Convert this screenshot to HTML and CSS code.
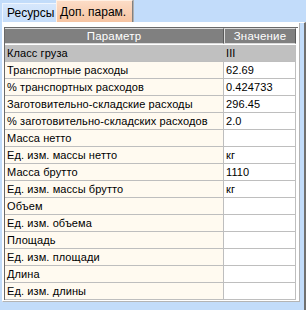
FILE: index.html
```html
<!DOCTYPE html>
<html>
<head>
<meta charset="utf-8">
<link rel="stylesheet" href="styles.css">
</head>
<body>
<div class="tabs">
  <div class="tab tab-blue">Ресурсы</div>
  <div class="tab tab-active">Доп. парам.</div>
</div>
<div class="frame">
  <div class="panel">
    <div class="grid">
      <div class="hcell">Параметр</div>
      <div class="hcell">Значение</div>

      <div class="cell p sel">Класс груза</div><div class="cell v sel">III</div>
      <div class="cell p">Транспортные расходы</div><div class="cell v">62.69</div>
      <div class="cell p">% транспортных расходов</div><div class="cell v">0.424733</div>
      <div class="cell p">Заготовительно-складские расходы</div><div class="cell v">296.45</div>
      <div class="cell p">% заготовительно-складских расходов</div><div class="cell v">2.0</div>
      <div class="cell p">Масса нетто</div><div class="cell v"></div>
      <div class="cell p">Ед. изм. массы нетто</div><div class="cell v">кг</div>
      <div class="cell p">Масса брутто</div><div class="cell v">1110</div>
      <div class="cell p">Ед. изм. массы брутто</div><div class="cell v">кг</div>
      <div class="cell p">Объем</div><div class="cell v"></div>
      <div class="cell p">Ед. изм. объема</div><div class="cell v"></div>
      <div class="cell p">Площадь</div><div class="cell v"></div>
      <div class="cell p">Ед. изм. площади</div><div class="cell v"></div>
      <div class="cell p">Длина</div><div class="cell v"></div>
      <div class="cell p">Ед. изм. длины</div><div class="cell v"></div>
    </div>
  </div>
</div>
</body>
</html>
```
FILE: styles.css
```css
html, body {
  margin: 0;
  padding: 0;
}
body {
  width: 306px;
  height: 310px;
  overflow: hidden;
  background: #c2dcfa;
  font-family: "Liberation Sans", Arial, sans-serif;
  font-size: 11px;
  color: #000;
}
.tabs {
  display: flex;
  align-items: flex-end;
  height: 22px;
  padding-left: 2px;
}
.tab {
  box-sizing: border-box;
  display: flex;
  align-items: center;
  font-size: 12px;
  white-space: nowrap;
}
.tab-blue {
  width: 54px;
  height: 19px;
  padding-left: 4px;
  background: linear-gradient(#d6e7fc, #c6ddf9);
  border-top: 1px solid #eef5fe;
  border-left: 1px solid #eef5fe;
}
.tab-active {
  width: 77px;
  height: 22px;
  padding-left: 3px;
  background: linear-gradient(#fcdcc6, #f6c4a2);
  border-top: 1px solid #fff0e4;
  border-left: 1px solid #fff0e4;
  border-right: 1px solid #808080;
  box-shadow: 1px 0 0 #b0b0b0;
}
.frame {
  height: 288px;
  margin-left: 2px;
  border-top: 1px solid #ffffff;
  border-right: 2px solid #707070;
}
.panel {
  box-sizing: border-box;
  width: 298px;
  height: 279px;
  background: #ffffff;
  border-right: 1px solid #b4b4b4;
  border-bottom: 1px solid #b4b4b4;
  border-left: 1px solid #ffffff;
  padding: 4px 1px 0 1px;
}
.grid {
  display: grid;
  grid-template-columns: 219px 72px;
  grid-auto-rows: 17px;
  border-top: 1px solid #6a6a6a;
  border-left: 1px solid #6a6a6a;
  width: 294px;
  box-sizing: border-box;
}
.hcell {
  height: 16px;
  box-sizing: border-box;
  background: #808080;
  color: #ffffff;
  text-align: center;
  line-height: 14px;
  font-size: 11.5px;
  letter-spacing: 0.2px;
  border-top: 1px solid #dcdcdc;
  border-left: 1px solid #dcdcdc;
  border-right: 1px solid #5a5a5a;
  border-bottom: 1px solid #dcdcdc;
}
.hcell:first-child {
  border-left: 0;
}
.cell {
  box-sizing: border-box;
  height: 17px;
  line-height: 16px;
  font-size: 11px;
  letter-spacing: 0.1px;
  white-space: nowrap;
  overflow: hidden;
  border-bottom: 1px solid #bebebe;
}
.p {
  background: #fffaf0;
  padding-left: 2px;
  border-right: 1px solid #bebebe;
}
.v {
  background: #ffffff;
  padding-left: 2px;
  border-right: 1px solid #bebebe;
}
.sel {
  background: #c0c0c0;
}
```
